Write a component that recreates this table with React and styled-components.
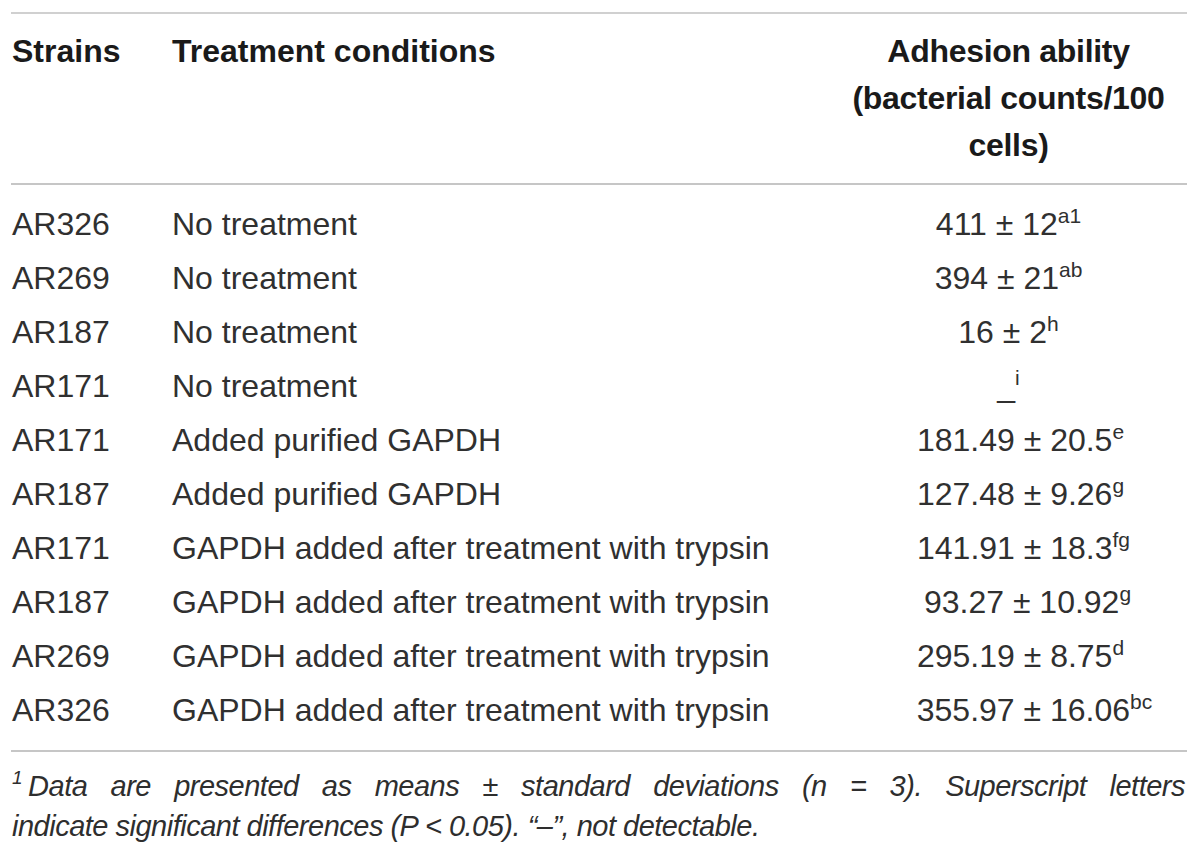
import React from "react";
import styled, { createGlobalStyle } from "styled-components";

const Global = createGlobalStyle`
  html, body { margin: 0; padding: 0; background: #ffffff; }
  body { font-family: "Liberation Sans", Arial, Helvetica, sans-serif; color: #1e1e1e; }
`;

const Page = styled.div`
  padding: 12px 13px 0 11px;
`;

const Table = styled.div`
  border-top: 2px solid #d0d0d0;
`;

const Grid = styled.div`
  display: grid;
  grid-template-columns: 161px 1fr 357px;
`;

const HeaderRow = styled(Grid)`
  padding: 14px 0 14px;
  border-bottom: 2px solid #c6c6c6;
  font-weight: 700;
  font-size: 32px;
  line-height: 47px;
  color: #1a1a1a;
`;

const HeadCell = styled.div`
  padding-left: ${(p) => (p.$first ? "1px" : "0")};
  text-align: ${(p) => (p.$center ? "center" : "left")};
  letter-spacing: ${(p) => (p.$center ? "-0.3px" : "0")};
`;

const Body = styled.div`
  padding: 12px 0 13px;
  border-bottom: 2px solid #c6c6c6;
`;

const Row = styled(Grid)`
  height: 54px;
  align-items: center;
  font-size: 32px;
  line-height: 40px;
  color: #303030;
`;

const Cell = styled.div`
  padding-left: ${(p) => (p.$first ? "1px" : "0")};
  white-space: nowrap;
`;

const ValueCell = styled.div`
  text-align: center;
  white-space: nowrap;
  padding-left: ${(p) => p.$shift || 0}px;
`;

const Sup = styled.sup`
  font-size: 21px;
  line-height: 0;
  vertical-align: 12px;
`;

const Footnote = styled.div`
  padding: 14px 2px 0 1px;
  font-style: italic;
  font-size: 29px;
  letter-spacing: -0.5px;
  line-height: 40px;
  color: #2e2e2e;
`;

const NoteLine = styled.div`
  white-space: nowrap;
  text-align: ${(p) => (p.$justify ? "justify" : "left")};
  text-align-last: ${(p) => (p.$justify ? "justify" : "auto")};
`;

const NoteSup = styled.sup`
  font-size: 19px;
  line-height: 0;
  vertical-align: 12px;
  margin-right: 6px;
`;

const rows = [
  ["AR326", "No treatment", "411 ± 12", "a1", 0],
  ["AR269", "No treatment", "394 ± 21", "ab", 0],
  ["AR187", "No treatment", "16 ± 2", "h", 0],
  ["AR171", "No treatment", "_", "i", 0],
  ["AR171", "Added purified GAPDH", "181.49 ± 20.5", "e", 24],
  ["AR187", "Added purified GAPDH", "127.48 ± 9.26", "g", 24],
  ["AR171", "GAPDH added after treatment with trypsin", "141.91 ± 18.3", "fg", 30],
  ["AR187", "GAPDH added after treatment with trypsin", "93.27 ± 10.92", "g", 38],
  ["AR269", "GAPDH added after treatment with trypsin", "295.19 ± 8.75", "d", 24],
  ["AR326", "GAPDH added after treatment with trypsin", "355.97 ± 16.06", "bc", 52],
];

export default function App() {
  return (
    <Page>
      <Global />
      <Table>
        <HeaderRow>
          <HeadCell $first>Strains</HeadCell>
          <HeadCell>Treatment conditions</HeadCell>
          <HeadCell $center>
            Adhesion ability
            <br />
            (bacterial counts/100
            <br />
            cells)
          </HeadCell>
        </HeaderRow>
        <Body>
          {rows.map(([s, t, v, sup, shift], i) => (
            <Row key={i}>
              <Cell $first>{s}</Cell>
              <Cell>{t}</Cell>
              <ValueCell $shift={shift}>
                {v}
                <Sup>{sup}</Sup>
              </ValueCell>
            </Row>
          ))}
        </Body>
      </Table>
      <Footnote>
        <NoteLine $justify>
          <NoteSup>1</NoteSup>Data are presented as means ± standard deviations (n = 3). Superscript letters
        </NoteLine>
        <NoteLine>indicate significant differences (P &lt; 0.05). “–”, not detectable.</NoteLine>
      </Footnote>
    </Page>
  );
}
